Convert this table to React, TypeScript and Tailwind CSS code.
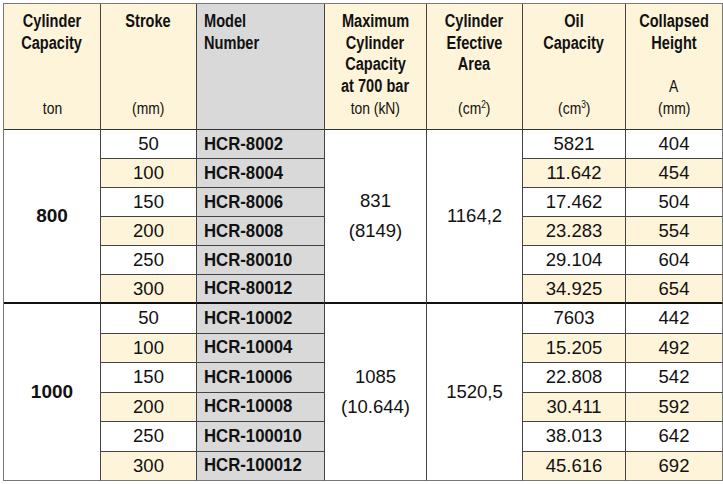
import React from "react";

const sans = "font-['Liberation_Sans',Arial,sans-serif]";

type Group = {
  cap: string;
  strokes: string[];
  models: string[];
  max: [string, string];
  area: string;
  oil: string[];
  height: string[];
};

const groups: Group[] = [
  {
    cap: "800",
    strokes: ["50", "100", "150", "200", "250", "300"],
    models: ["HCR-8002", "HCR-8004", "HCR-8006", "HCR-8008", "HCR-80010", "HCR-80012"],
    max: ["831", "(8149)"],
    area: "1164,2",
    oil: ["5821", "11.642", "17.462", "23.283", "29.104", "34.925"],
    height: ["404", "454", "504", "554", "604", "654"],
  },
  {
    cap: "1000",
    strokes: ["50", "100", "150", "200", "250", "300"],
    models: ["HCR-10002", "HCR-10004", "HCR-10006", "HCR-10008", "HCR-100010", "HCR-100012"],
    max: ["1085", "(10.644)"],
    area: "1520,5",
    oil: ["7603", "15.205", "22.808", "30.411", "38.013", "45.616"],
    height: ["442", "492", "542", "592", "642", "692"],
  },
];

function Head({ lines, last = false }: { lines: React.ReactNode[]; last?: boolean }) {
  return (
    <div
      className={`bg-[#fef4d9] border-b border-b-[#333] ${last ? "border-r border-r-[#777]" : "border-r border-r-[#444]"} pt-[7px] flex flex-col items-center text-center`}
    >
      {lines.map((l, i) => (
        <div key={i} className="h-[21.7px] leading-[21.7px] whitespace-nowrap">
          {l}
        </div>
      ))}
    </div>
  );
}

const B = ({ children, left = false }: { children: React.ReactNode; left?: boolean }) => (
  <span className={`${sans} inline-block font-bold text-[18px] text-[#111] scale-x-[0.81] ${left ? "origin-left" : "origin-center"}`}>
    {children}
  </span>
);
const R = ({ children }: { children: React.ReactNode }) => (
  <span className={`${sans} inline-block text-[16.5px] text-[#111] scale-x-[0.84] origin-center`}>{children}</span>
);

export default function App() {
  return (
    <div className="w-[723px] h-[484px] bg-white pl-[3px] pt-[3px]">
      <div className="grid grid-cols-[97px_96px_128px_102px_96px_103px_97px] grid-rows-[126px_repeat(6,29px)_repeat(6,29.5px)] border-l border-t border-[#777] w-[720px]">
        <Head lines={[<B>Cylinder</B>, <B>Capacity</B>, "", "", <R>ton</R>]} />
        <Head lines={[<B>Stroke</B>, "", "", "", <R>(mm)</R>]} />
        <div className="bg-[#d9d9d9] border-b border-b-[#333] border-r border-r-[#444] pt-[7px] pl-[7px] flex flex-col">
          <div className="h-[21.7px] leading-[21.7px] whitespace-nowrap"><B left>Model</B></div>
          <div className="h-[21.7px] leading-[21.7px] whitespace-nowrap"><B left>Number</B></div>
        </div>
        <Head lines={[<B>Maximum</B>, <B>Cylinder</B>, <B>Capacity</B>, <B>at 700 bar</B>, <R>ton (kN)</R>]} />
        <Head
          lines={[
            <B>Cylinder</B>,
            <B>Efective</B>,
            <B>Area</B>,
            "",
            <R>
              (cm<sup className="text-[10px] -top-[6px]">2</sup>)
            </R>,
          ]}
        />
        <Head
          lines={[
            <B>Oil</B>,
            <B>Capacity</B>,
            "",
            "",
            <R>
              (cm<sup className="text-[10px] -top-[6px]">3</sup>)
            </R>,
          ]}
        />
        <Head lines={[<B>Collapsed</B>, <B>Height</B>, "", <R>A</R>, <R>(mm)</R>]} last />

        {groups.map((g, gi) => {
          const bottom = gi === 0 ? "border-b-2 border-b-[#111]" : "border-b border-b-[#777]";
          const rows: React.ReactNode[] = [];
          g.strokes.forEach((s, i) => {
            const cream = i % 2 === 1;
            const isLast = i === 5;
            const rb = isLast ? bottom : "border-b border-b-[#444]";
            if (i === 0) {
              rows.push(
                <div key={`cap${gi}`} className={`row-span-6 bg-white border-r border-r-[#444] ${bottom} flex items-center justify-center`}>
                  <span className={`${sans} font-bold text-[19px] text-[#111]`}>{g.cap}</span>
                </div>
              );
            }
            rows.push(
              <div key={`s${gi}${i}`} className={`${cream ? "bg-[#fef4d9]" : "bg-white"} border-r border-r-[#444] ${rb} flex items-center justify-center`}>
                <span className={`${sans} text-[18.5px] text-[#111]`}>{s}</span>
              </div>
            );
            rows.push(
              <div key={`m${gi}${i}`} className={`bg-[#d9d9d9] border-r border-r-[#444] ${rb} flex items-center pl-[7px]`}>
                <span className={`${sans} inline-block whitespace-nowrap font-bold text-[18px] scale-x-[0.93] origin-left text-[#111]`}>
                  {g.models[i]}
                </span>
              </div>
            );
            if (i === 0) {
              rows.push(
                <div key={`max${gi}`} className={`row-span-6 bg-white border-r border-r-[#444] ${bottom} flex flex-col items-center justify-center`}>
                  <span className={`${sans} text-[18.5px] leading-[30px] text-[#111]`}>{g.max[0]}</span>
                  <span className={`${sans} text-[18.5px] leading-[30px] text-[#111]`}>{g.max[1]}</span>
                </div>
              );
              rows.push(
                <div key={`area${gi}`} className={`row-span-6 bg-white border-r border-r-[#444] ${bottom} flex items-center justify-center`}>
                  <span className={`${sans} text-[18.5px] text-[#111]`}>{g.area}</span>
                </div>
              );
            }
            rows.push(
              <div key={`o${gi}${i}`} className={`${cream ? "bg-[#fef4d9]" : "bg-white"} border-r border-r-[#444] ${rb} flex items-center justify-center`}>
                <span className={`${sans} text-[18.5px] text-[#111]`}>{g.oil[i]}</span>
              </div>
            );
            rows.push(
              <div key={`h${gi}${i}`} className={`${cream ? "bg-[#fef4d9]" : "bg-white"} border-r border-r-[#777] ${rb} flex items-center justify-center`}>
                <span className={`${sans} text-[18.5px] text-[#111]`}>{g.height[i]}</span>
              </div>
            );
          });
          return rows;
        })}
      </div>
    </div>
  );
}
